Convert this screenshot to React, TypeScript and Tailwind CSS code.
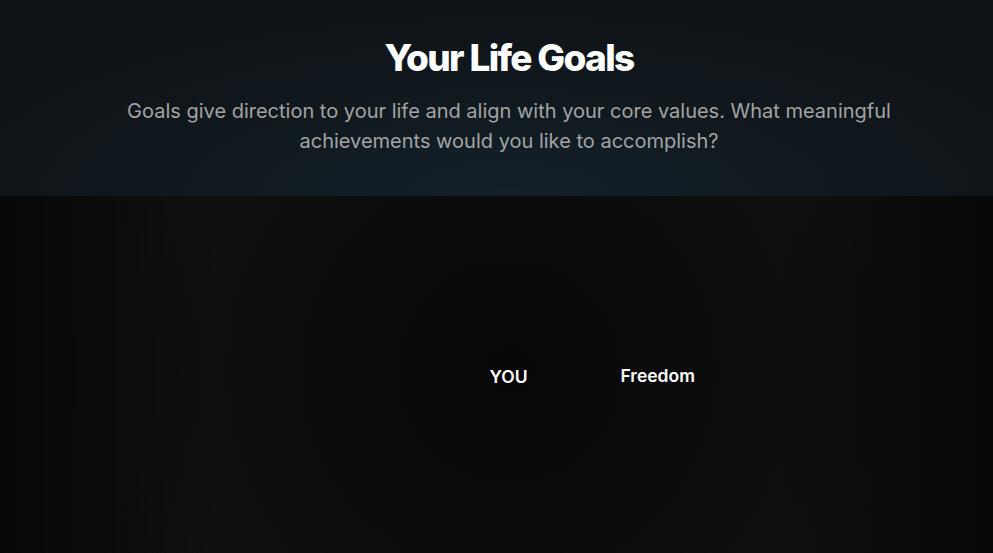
import type { JSX } from 'react';

type GoalNode = { label: string; offset: string };

// nodes placed around the centre "YOU" node
const goals: GoalNode[] = [{ label: 'Freedom', offset: 'left-[131px]' }];

export default function App(): JSX.Element {
  return (
    <div className="flex h-[553px] w-[993px] flex-col overflow-hidden bg-[#0a0a0a] font-['Inter',_'Liberation_Sans',_sans-serif]">
      <header className="flex h-[196px] shrink-0 flex-col items-center bg-[radial-gradient(ellipse_60%_100%_at_51%_100%,#14202a_0%,#111a20_45%,#0e1215_100%)] pt-[36px] pr-[6px] pl-[31px]">
        <h1 className="text-[37px] leading-[44px] font-extrabold tracking-[-0.045em] text-white">
          Your Life Goals
        </h1>
        <p className="mt-[16px] max-w-[780px] text-center text-[20px] leading-[30px] text-[#a3a3a3]">
          Goals give direction to your life and align with your core values. What meaningful
          achievements would you like to accomplish?
        </p>
      </header>
      <main className="relative flex-1 bg-[radial-gradient(circle_at_51.3%_49%,#070707_0px,#0b0b0b_140px,#111111_380px,#101010_520px)]">
        <div className="pointer-events-none absolute inset-0 bg-[linear-gradient(to_right,#070707_0%,rgba(7,7,7,0)_22%,rgba(7,7,7,0)_78%,#070707_100%)]" />
        <div className="relative flex h-full justify-center pt-[169px] pl-[24px]">
          <div className="relative">
            <span className="text-[17.5px] leading-[24px] font-semibold text-white">YOU</span>
            {goals.map((g) => (
              <span
                key={g.label}
                className={`absolute top-[-1px] ${g.offset} text-[17.5px] leading-[24px] font-semibold whitespace-nowrap text-white`}
              >
                {g.label}
              </span>
            ))}
          </div>
        </div>
      </main>
    </div>
  );
}
